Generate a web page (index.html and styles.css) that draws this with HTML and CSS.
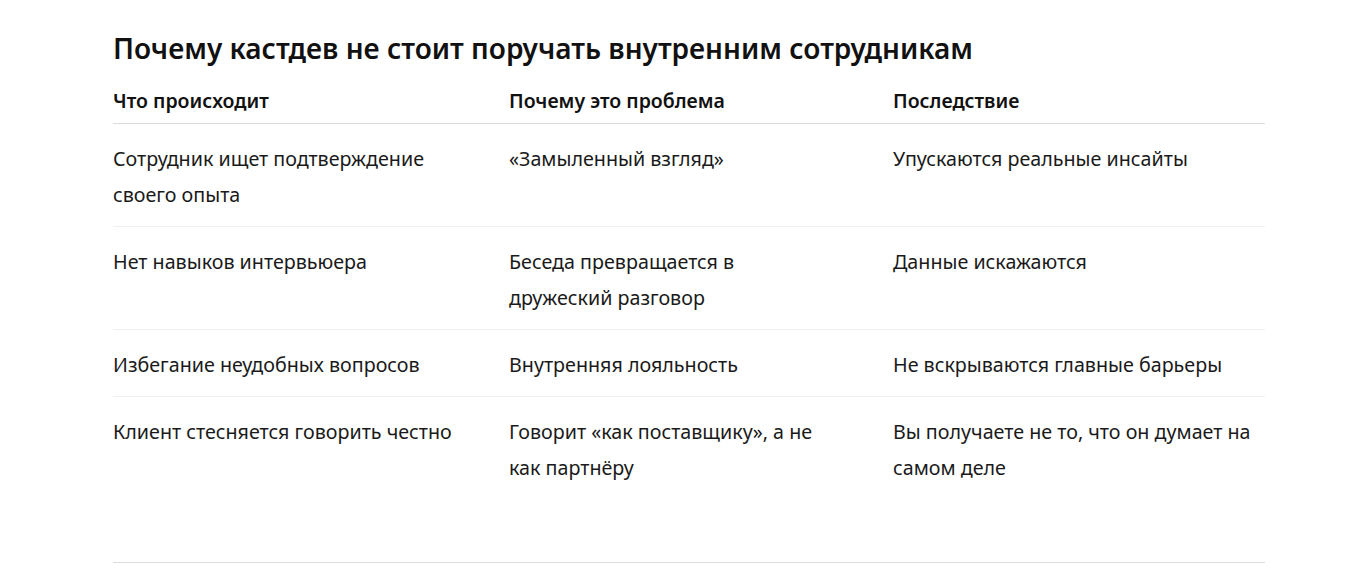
FILE: index.html
```html
<!DOCTYPE html>
<html lang="ru">
<head>
<meta charset="utf-8">
<title>Почему кастдев не стоит поручать внутренним сотрудникам</title>
<link rel="stylesheet" href="styles.css">
</head>
<body>
<section class="section">
  <h2 class="title">Почему кастдев не стоит поручать внутренним сотрудникам</h2>
  <table class="table">
    <colgroup>
      <col class="col-1">
      <col class="col-2">
      <col class="col-3">
    </colgroup>
    <thead>
      <tr>
        <th class="cell-1">Что происходит</th>
        <th class="cell-2">Почему это проблема</th>
        <th class="cell-3">Последствие</th>
      </tr>
    </thead>
    <tbody>
      <tr>
        <td class="cell-1">Сотрудник ищет подтверждение своего опыта</td>
        <td class="cell-2">«Замыленный взгляд»</td>
        <td class="cell-3">Упускаются реальные инсайты</td>
      </tr>
      <tr>
        <td class="cell-1">Нет навыков интервьюера</td>
        <td class="cell-2">Беседа превращается в дружеский разговор</td>
        <td class="cell-3">Данные искажаются</td>
      </tr>
      <tr>
        <td class="cell-1">Избегание неудобных вопросов</td>
        <td class="cell-2">Внутренняя лояльность</td>
        <td class="cell-3">Не вскрываются главные барьеры</td>
      </tr>
      <tr>
        <td class="cell-1">Клиент стесняется говорить честно</td>
        <td class="cell-2">Говорит «как поставщику», а не как партнёру</td>
        <td class="cell-3">Вы получаете не то, что он думает на самом деле</td>
      </tr>
    </tbody>
  </table>
  <hr class="divider">
</section>
</body>
</html>
```

FILE: styles.css
```css
html, body {
  margin: 0;
  padding: 0;
  background: #ffffff;
}

body {
  font-family: "Noto Sans", "Open Sans", "Liberation Sans", sans-serif;
  color: #1a1a1a;
}

.section {
  width: 1152px;
  margin-left: 113px;
  padding-top: 28px;
}

.title {
  margin: 0 0 19px;
  font-size: 28px;
  line-height: 40px;
  font-weight: 600;
  color: #111111;
}

.table {
  width: 1152px;
  border-collapse: collapse;
  table-layout: fixed;
}

.col-1 { width: 396px; }
.col-2 { width: 384px; }
.col-3 { width: 372px; }

.table th,
.table td {
  box-sizing: border-box;
  text-align: left;
}

.cell-1 { padding-right: 32px; }
.cell-2 { padding-right: 56px; }
.cell-3 { padding-right: 0; }

.table th {
  font-size: 19.5px;
  font-weight: 600;
  line-height: 28px;
  padding-top: 0;
  padding-bottom: 8px;
  padding-left: 0;
  border-bottom: 1px solid #dcdcdc;
  color: #111111;
}

.table td {
  vertical-align: top;
  font-size: 19.7px;
  line-height: 36px;
  padding-top: 17px;
  padding-bottom: 13px;
  padding-left: 0;
  border-bottom: 1px solid #f0f0f0;
}

.table tbody tr:last-child td {
  border-bottom: none;
}

.divider {
  margin: 63px 0 0;
  border: 0;
  border-top: 1px solid #dcdcdc;
  height: 0;
}
```
